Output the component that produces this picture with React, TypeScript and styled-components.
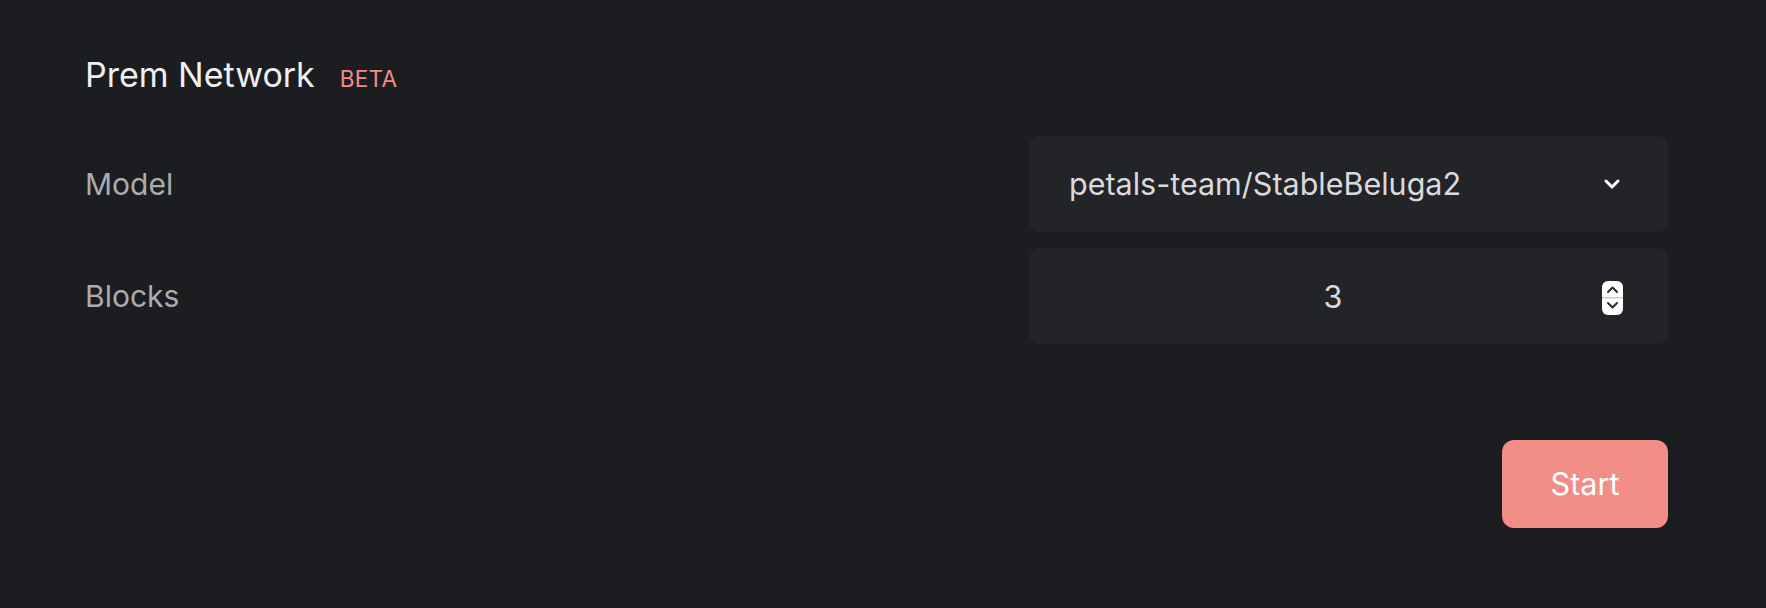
import React from "react";
import styled, { createGlobalStyle } from "styled-components";

const GlobalStyle = createGlobalStyle`
  * { box-sizing: border-box; }
  html, body {
    margin: 0;
    padding: 0;
    background: #1c1d21;
  }
  body {
    font-family: Inter, "Noto Sans", sans-serif;
    -webkit-font-smoothing: antialiased;
  }
`;

const Page = styled.main`
  width: 1766px;
  height: 608px;
  background: #1c1d21;
  padding: 58px 98px 0 85px;
  display: flex;
  flex-direction: column;
`;

const Header = styled.div`
  display: flex;
  align-items: baseline;
  gap: 25px;
  margin-bottom: 44px;
`;

const Title = styled.h1`
  margin: 0;
  font-size: 34px;
  line-height: 1;
  font-weight: 400;
  color: #efeff0;
`;

const Badge = styled.span`
  font-size: 22.5px;
  line-height: 1;
  font-weight: 400;
  color: #f28b86;
  letter-spacing: 0.3px;
`;

const Fields = styled.div`
  display: flex;
  flex-direction: column;
  gap: 16px;
`;

const Row = styled.div`
  display: flex;
  align-items: center;
  justify-content: space-between;
`;

const Label = styled.label`
  font-size: 30px;
  line-height: 1;
  color: #abacb0;
`;

const FieldBox = styled.div<{ $padRight: number }>`
  width: 639px;
  height: 96px;
  background: #232428;
  border-radius: 11px;
  display: flex;
  align-items: center;
  padding: 0 ${(p) => p.$padRight}px 0 40px;
`;

const SelectButton = styled.button`
  all: unset;
  flex: 1;
  display: flex;
  align-items: center;
  justify-content: space-between;
  height: 100%;
  cursor: pointer;
  font-family: Inter, "Noto Sans", sans-serif;
  font-size: 30.5px;
  line-height: 1;
  color: #dadadc;
`;

const NumberInput = styled.input`
  flex: 1;
  min-width: 0;
  border: none;
  outline: none;
  background: transparent;
  text-align: center;
  font-family: Inter, "Noto Sans", sans-serif;
  font-size: 30.5px;
  line-height: 1;
  color: #dadadc;
  padding: 0;
  -moz-appearance: textfield;
  &::-webkit-outer-spin-button,
  &::-webkit-inner-spin-button {
    -webkit-appearance: none;
    margin: 0;
  }
`;

const Spinner = styled.svg`
  flex: none;
  margin-left: 5px;
  margin-top: 4px;
`;

const Actions = styled.div`
  display: flex;
  justify-content: flex-end;
  margin-top: 96px;
`;

const StartButton = styled.button`
  width: 166px;
  height: 88px;
  border: none;
  border-radius: 12px;
  background: #f28d88;
  color: #ffffff;
  font-family: Inter, "Noto Sans", sans-serif;
  font-size: 30.5px;
  line-height: 1;
  font-weight: 400;
  cursor: pointer;
`;

const Chevron = () => (
  <svg width="16" height="10" viewBox="0 0 16 10" aria-hidden="true">
    <path
      d="M2 2 L8 8 L14 2"
      fill="none"
      stroke="#ffffff"
      strokeWidth="3"
      strokeLinecap="round"
      strokeLinejoin="round"
    />
  </svg>
);

export default function App() {
  return (
    <>
      <GlobalStyle />
      <Page>
        <Header>
          <Title>Prem Network</Title>
          <Badge>BETA</Badge>
        </Header>
        <Fields>
          <Row>
            <Label>Model</Label>
            <FieldBox $padRight={48}>
              <SelectButton type="button">
                <span>petals-team/StableBeluga2</span>
                <Chevron />
              </SelectButton>
            </FieldBox>
          </Row>
          <Row>
            <Label>Blocks</Label>
            <FieldBox $padRight={45}>
              <NumberInput type="number" defaultValue={3} />
              <Spinner width="21" height="34" viewBox="0 0 21 34" aria-hidden="true">
                <rect x="0" y="0" width="21" height="34" rx="6" fill="#ffffff" />
                <rect x="0" y="16" width="21" height="1.5" fill="#c9c9cc" />
                <path
                  d="M6 11 L10.5 6.5 L15 11"
                  fill="none"
                  stroke="#2a2b2f"
                  strokeWidth="2"
                  strokeLinecap="round"
                  strokeLinejoin="round"
                />
                <path
                  d="M6 22 L10.5 26.5 L15 22"
                  fill="none"
                  stroke="#2a2b2f"
                  strokeWidth="2"
                  strokeLinecap="round"
                  strokeLinejoin="round"
                />
              </Spinner>
            </FieldBox>
          </Row>
        </Fields>
        <Actions>
          <StartButton type="button">Start</StartButton>
        </Actions>
      </Page>
    </>
  );
}
